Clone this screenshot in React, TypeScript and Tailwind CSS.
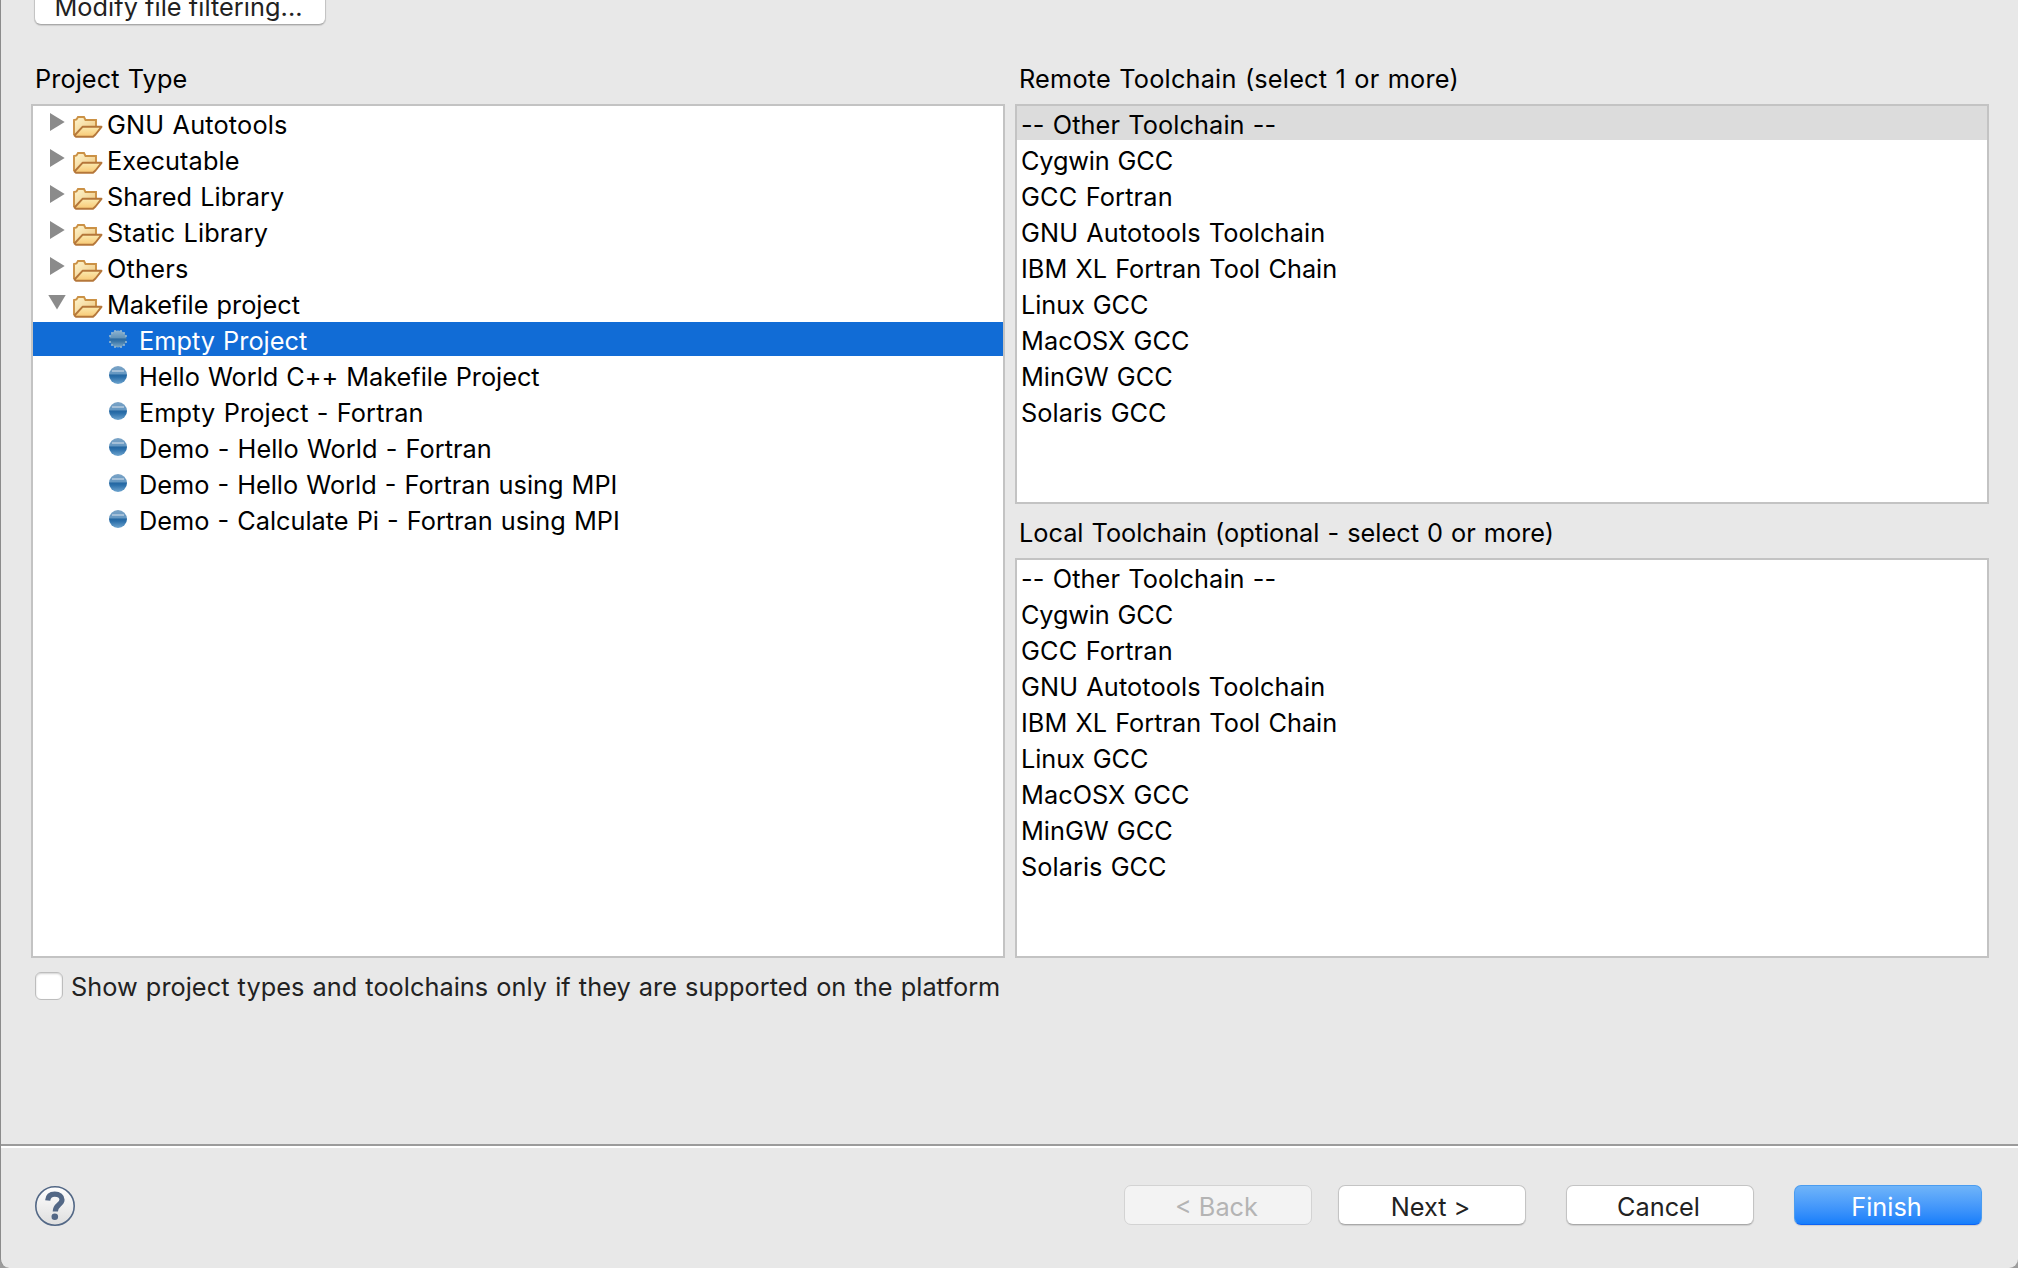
import type { ReactNode } from "react";

const TOOLCHAINS = [
  { name: "-- Other Toolchain --", track: "tracking-[0.100px]" },
  { name: "Cygwin GCC", track: "tracking-[-0.140px]" },
  { name: "GCC Fortran", track: "tracking-[0.170px]" },
  { name: "GNU Autotools Toolchain", track: "tracking-[0.100px]" },
  { name: "IBM XL Fortran Tool Chain", track: "tracking-[0.020px]" },
  { name: "Linux GCC", track: "tracking-[-0.080px]" },
  { name: "MacOSX GCC", track: "tracking-[0.050px]" },
  { name: "MinGW GCC", track: "tracking-[0px]" },
  { name: "Solaris GCC", track: "tracking-[0.050px]" },
];

const FOLDERS = [
  { name: "GNU Autotools", track: "tracking-[0.170px]" },
  { name: "Executable", track: "tracking-[0.100px]" },
  { name: "Shared Library", track: "tracking-[0.050px]" },
  { name: "Static Library", track: "tracking-[0.100px]" },
  { name: "Others", track: "tracking-[0.250px]" },
  { name: "Makefile project", track: "tracking-[0px]", open: true },
];

const TEMPLATES = [
  { name: "Empty Project", track: "tracking-[0.020px]", selected: true },
  { name: "Hello World C++ Makefile Project", track: "tracking-[-0.020px]" },
  { name: "Empty Project - Fortran", track: "tracking-[0.120px]" },
  { name: "Demo - Hello World - Fortran", track: "tracking-[0.050px]" },
  { name: "Demo - Hello World - Fortran using MPI", track: "tracking-[0px]" },
  { name: "Demo - Calculate Pi - Fortran using MPI", track: "tracking-[0px]" },
];

function Folder() {
  return (
    <svg width="32" height="24" viewBox="0 0 32 24" className="mt-2 ml-[5px] h-6 w-8 shrink-0">
      <defs>
        <linearGradient id="back" x1="0" y1="0" x2="1" y2="1">
          <stop offset="0" stopColor="#fff6cf" />
          <stop offset="1" stopColor="#edc47a" />
        </linearGradient>
        <linearGradient id="front" x1="0" y1="0" x2="0" y2="1">
          <stop offset="0" stopColor="#fbeab0" />
          <stop offset="1" stopColor="#f8c873" />
        </linearGradient>
      </defs>
      <path d="M3 21V6L5.500 5.500L7 3H13L14.500 6H25V12.500" fill="url(#back)" stroke="#cb9145" strokeWidth="1.900" />
      <path d="M3.500 21.500L11.500 12.800H30.500L24.500 20.500L22 22.800H5Z" fill="url(#front)" stroke="#b5773a" strokeWidth="1.900" strokeLinejoin="round" />
    </svg>
  );
}

function Ball() {
  return (
    <svg width="18" height="18" viewBox="0 0 18 18" className="mt-2 ml-[76px] shrink-0">
      <defs>
        <linearGradient id="ball" x1="0" y1="0" x2="0" y2="1">
          <stop offset="0" stopColor="#7ba3c6" />
          <stop offset="0.440" stopColor="#6497c2" />
          <stop offset="0.500" stopColor="#2467a2" />
          <stop offset="0.620" stopColor="#2b6faa" />
          <stop offset="1" stopColor="#6fa5cf" />
        </linearGradient>
      </defs>
      <circle cx="9" cy="9" r="9" fill="url(#ball)" />
      <path d="M3 5H15" stroke="#a3bfd8" strokeWidth="2" />
    </svg>
  );
}

function BallSelected() {
  return (
    <svg width="18" height="18" viewBox="0 0 18 18" className="mt-2 ml-[76px] shrink-0">
      <defs>
        <linearGradient id="ballsel" x1="0" y1="0" x2="0" y2="1">
          <stop offset="0" stopColor="#8fb4d0" />
          <stop offset="0.420" stopColor="#6394ba" />
          <stop offset="0.500" stopColor="#2d6ba2" />
          <stop offset="0.620" stopColor="#3573a8" />
          <stop offset="1" stopColor="#7fabc9" />
        </linearGradient>
      </defs>
      <circle cx="9" cy="9" r="8.500" fill="url(#ballsel)" />
      <path
        d="M5 0h2v2H5zM11 0h2v2h-2zM2 2h2v2H2zM14 2h2v2h-2zM0 5h2v2H0zM16 5h2v2h-2zM0 11h2v2H0zM16 11h2v2h-2zM2 14h2v2H2zM14 14h2v2h-2zM5 16h2v2H5zM11 16h2v2h-2z"
        fill="#94b7d0"
        opacity="0.800"
      />
    </svg>
  );
}

function Toolchains({ selected }: { selected?: boolean }) {
  return (
    <ul className="flex h-[400px] flex-col gap-0.5 border-2 border-[#c3c3c3] bg-white">
      {TOOLCHAINS.map((t, i) => (
        <li key={t.name} className={"h-[34px] pl-1 leading-[38px] " + t.track + (selected && i === 0 ? " bg-[#dcdcdc]" : "")}>
          {t.name}
        </li>
      ))}
    </ul>
  );
}

function PushButton({ children, className }: { children: ReactNode; className: string }) {
  return (
    <button className={"h-10 w-[188px] shrink-0 rounded-[7px] border pr-[3px] text-center leading-[42px] " + className}>
      {children}
    </button>
  );
}

const PLAIN = "border-[#c4c4c4] border-b-[#a9a9a9] bg-white text-[#222] shadow-[0_1px_1px_rgba(0,0,0,0.12)]";

export default function App() {
  return (
    <div className="h-[1268px] w-[2018px] overflow-hidden bg-[#9c9c9c]">
      <div className="flex h-full flex-col overflow-hidden rounded-b-[9px] border-l border-[#8b8b8b] bg-[#e8e8e8] font-['Inter',sans-serif] text-[25.300px] tracking-[0px] whitespace-nowrap text-black [word-spacing:1px]">
        <div className="flex h-[104px] flex-col justify-between">
          <div className="flex h-[25px] items-end pl-[33px]">
            <button className="h-10 w-[292px] shrink-0 rounded-[7px] border border-[#c4c4c4] border-b-[#a9a9a9] bg-white pr-[3px] leading-[42px] tracking-[0.050px] text-[#222] shadow-[0_1px_1px_rgba(0,0,0,0.12)]">
              Modify file filtering...
            </button>
          </div>
          <div className="flex h-[42px] leading-[34px]">
            <span className="w-[984px] pl-[34px] tracking-[0.080px]">Project Type</span>
            <span className="pl-[34px] tracking-[0.200px]">Remote Toolchain (select 1 or more)</span>
          </div>
        </div>
        <div className="flex h-[854px] gap-2.5 pl-[30px]">
          <ul className="flex w-[974px] flex-col gap-0.5 border-2 border-[#c3c3c3] bg-white">
            {FOLDERS.map((f) => (
              <li key={f.name} className="flex h-[34px]">
                <svg width="18" height="20" viewBox="0 0 18 20" className="mt-[7px] ml-[15px] shrink-0">
                  <path d={f.open ? "M0.300 2H17.700L9 16.500Z" : "M2 0V18L16.700 9Z"} fill="#8b8b8b" />
                </svg>
                <Folder />
                <span className={"ml-1 leading-[38px] " + f.track}>{f.name}</span>
              </li>
            ))}
            {TEMPLATES.map((t) => (
              <li key={t.name} className={t.selected ? "flex h-[34px] bg-[#116cd6] text-white" : "flex h-[34px]"}>
                {t.selected ? <BallSelected /> : <Ball />}
                <span className={"ml-3 leading-[38px] " + t.track}>{t.name}</span>
              </li>
            ))}
          </ul>
          <div className="flex w-[974px] flex-col">
            <Toolchains selected />
            <div className="h-[54px] pl-1 leading-[58px] tracking-[-0.010px]">Local Toolchain (optional - select 0 or more)</div>
            <Toolchains />
          </div>
        </div>
        <label className="flex h-[186px] items-start pt-3.5 pl-[34px] text-[#222]">
          <span className="h-7 w-7 rounded-md border border-[#bdbdbd] bg-white shadow-[inset_0_1px_2px_rgba(0,0,0,0.18)]" />
          <span className="ml-2 leading-[30px] tracking-[0.030px]">Show project types and toolchains only if they are supported on the platform</span>
        </label>
        <div className="flex h-[124px] items-start border-t-2 border-[#9b9b9b]">
          <div className="flex h-full w-full items-start border-t-2 border-white pt-[37px] pl-[34px]">
            <svg width="40" height="40" viewBox="0 0 40 40" className="mt-[1px] shrink-0">
              <defs>
                <linearGradient id="help" x1="0" y1="0" x2="0" y2="1">
                  <stop offset="0" stopColor="#ffffff" />
                  <stop offset="1" stopColor="#dedede" />
                </linearGradient>
              </defs>
              <circle cx="20" cy="20" r="19.200" fill="url(#help)" stroke="#536886" strokeWidth="1.600" />
              <path d="M12.700 14.500C13 10.300 15.700 8.200 19.800 8.200C24.300 8.200 27 10.500 27 13.700C27 18.700 20.300 18.500 20.300 25.500" fill="none" stroke="#536886" strokeWidth="5.200" />
              <circle cx="19.800" cy="30.800" r="3.300" fill="#536886" />
            </svg>
            <PushButton className="ml-[1049px] border-[#d3d3d3] bg-[#f3f3f3] text-[#b4b4b4]">&lt; Back</PushButton>
            <PushButton className={"ml-[26px] " + PLAIN}>Next &gt;</PushButton>
            <PushButton className={"ml-[40px] " + PLAIN}>Cancel</PushButton>
            <PushButton className="ml-[40px] border-[#4a9cf0] border-b-[#0d63f5] bg-linear-to-b from-[#6fb4f9] to-[#157efb] text-white shadow-[0_1px_1px_rgba(0,0,0,0.12)]">
              Finish
            </PushButton>
          </div>
        </div>
      </div>
    </div>
  );
}
